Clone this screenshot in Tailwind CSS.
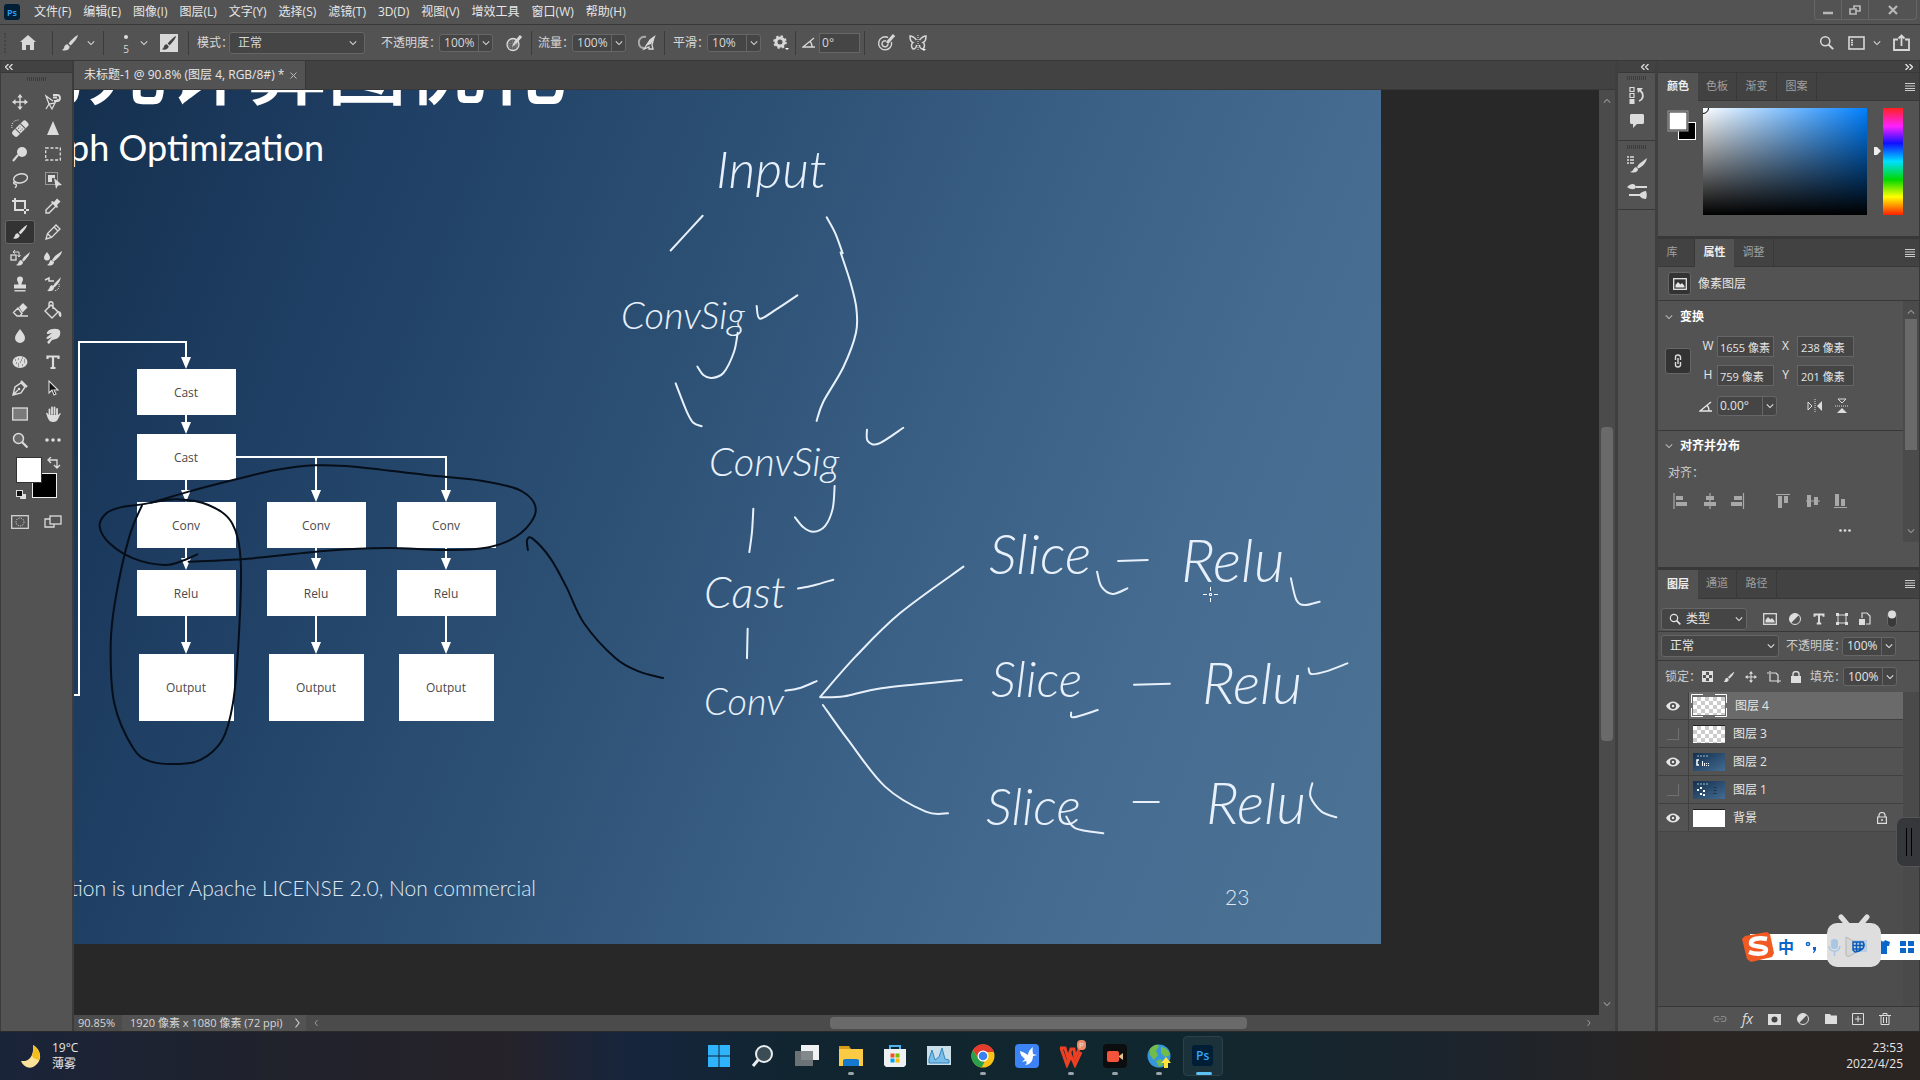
<!DOCTYPE html>
<html lang="zh-CN">
<head>
<meta charset="utf-8">
<title>未标题-1 - Photoshop</title>
<script src="https://cdn.jsdelivr.net/npm/@tailwindcss/browser@4"></script>
</head>
<body class="flex h-screen flex-col overflow-hidden bg-[#535353] font-['Open_Sans','Noto_Sans_CJK_SC',sans-serif] text-xs leading-4 text-[#e6e6e6]">

<svg class="hidden" aria-hidden="true">
  <symbol id="chev" viewBox="0 0 10 6"><path d="M1 1l4 4 4-4" fill="none" stroke="currentColor" stroke-width="1.3"/></symbol>
  <symbol id="brush" viewBox="0 0 18 18"><path d="M17 1c-2 .6-7 5.200-9.500 8.500l2 2C12.500 9 16.500 4 17 1zM6.500 10.300c-2 0-3 1.400-3.300 3-.3 1.500-1.200 2.200-2.200 2.700 2.800 1.200 7.300.5 7.700-3.300z" fill="currentColor"/></symbol>
  <symbol id="move" viewBox="0 0 18 18"><path d="M9 2v14M2 9h14" stroke="currentColor" stroke-width="1.500"/><path d="M9 0L6 4h6zM9 18l-3-4h6zM0 9l4-3v6zM18 9l-4-3v6z" fill="currentColor"/></symbol>
  <symbol id="menu" viewBox="0 0 10 8"><path d="M0 .5h10M0 3h10M0 5.500h10M0 7.500h10" stroke="currentColor"/></symbol>
  <symbol id="angle" viewBox="0 0 13 11"><path d="M12 1L1 10h12M8 4.500c2 1.500 2 3 2 5.500" fill="none" stroke="currentColor" stroke-width="1.300"/></symbol>
  <symbol id="eye" viewBox="0 0 14 10"><path d="M0 5c3.500-6 10.500-6 14 0-3.500 6-10.500 6-14 0z" fill="currentColor"/><circle cx="7" cy="5" r="3" fill="#4d4d4d"/><circle cx="7" cy="5" r="1.300" fill="currentColor"/></symbol>
  <symbol id="half" viewBox="0 0 14 14"><circle cx="7" cy="7" r="5.500" fill="none" stroke="currentColor"/><path d="M3.100 10.900A5.500 5.500 0 0 1 10.900 3.100z" fill="currentColor"/></symbol>
  <symbol id="mag" viewBox="0 0 18 18"><circle cx="7.500" cy="7.500" r="5.500" fill="none" stroke="currentColor" stroke-width="1.800"/><path d="M11.500 11.500L17 17" stroke="currentColor" stroke-width="2.400"/></symbol>
  <symbol id="dots" viewBox="0 0 16 4"><circle cx="2" cy="2" r="1.800" fill="currentColor"/><circle cx="8" cy="2" r="1.800" fill="currentColor"/><circle cx="14" cy="2" r="1.800" fill="currentColor"/></symbol>
  <symbol id="pic" viewBox="0 0 14 12"><rect x=".7" y=".7" width="12.600" height="10.600" fill="none" stroke="currentColor" stroke-width="1.300"/><path d="M2.500 9.500V7L5 4l2.500 2.500L9 5l2.500 3v1.500z" fill="currentColor"/></symbol>
</svg>

<header class="flex h-[25px] shrink-0 items-center border-b border-[#383838] pl-1">
  <svg class="mr-3.5 h-4 w-4 shrink-0" viewBox="0 0 16 16"><rect width="16" height="16" rx="3" fill="#001e36"/><text x="3" y="11.500" font-size="9" font-weight="600" fill="#31a8ff">Ps</text></svg>
  <nav class="flex gap-3 whitespace-nowrap">
    <a href="#">文件(F)</a><a href="#">编辑(E)</a><a href="#">图像(I)</a><a href="#">图层(L)</a><a href="#">文字(Y)</a><a href="#">选择(S)</a><a href="#">滤镜(T)</a><a href="#">3D(D)</a><a href="#">视图(V)</a><a href="#">增效工具</a><a href="#">窗口(W)</a><a href="#">帮助(H)</a>
  </nav>
  <div class="mr-[3px] ml-auto flex h-5 self-start rounded-b border border-t-0 border-[#666] text-[#b8b8b8]">
    <button aria-label="最小化" class="grid w-[27px] place-items-center border-r border-[#666]"><svg class="h-3 w-3" viewBox="0 0 12 12"><path d="M1 9h10" stroke="currentColor" stroke-width="2.500"/></svg></button>
    <button aria-label="还原" class="grid w-[27px] place-items-center border-r border-[#666]"><svg class="h-3 w-3" viewBox="0 0 12 12"><path d="M1 5h6v5H1zM5 5V2h6v5H7" fill="none" stroke="currentColor" stroke-width="1.700"/></svg></button>
    <button aria-label="关闭" class="grid w-[47px] place-items-center"><svg class="h-2.5 w-2.5" viewBox="0 0 10 10"><path d="M1 1l8 8M9 1L1 9" stroke="currentColor" stroke-width="2.200"/></svg></button>
  </div>
</header>

<section class="flex h-9 shrink-0 items-center border-b border-[#383838] whitespace-nowrap text-[#d8d8d8]">
  <div class="ml-1 h-5 w-1 border-l-2 border-dotted border-[#444]"></div>
  <button aria-label="主页" class="ml-3 grid w-4 place-items-center"><svg class="h-4 w-4" viewBox="0 0 16 16"><path d="M8 0l8 7h-2v8h-4v-5H6v5H2V7H0z" fill="currentColor"/></svg></button>
  <div class="mr-2 ml-4 h-6 w-px bg-[#3c3c3c]"></div>
  <svg class="h-[18px] w-[18px]"><use href="#brush"/></svg>
  <svg class="ml-2 h-[6px] w-2"><use href="#chev"/></svg>
  <div class="mx-2 h-6 w-px bg-[#3c3c3c]"></div>
  <div class="flex w-7 flex-col items-center gap-1 pt-1 text-[10px] leading-3"><span class="h-1 w-1 rounded-full bg-[#ddd]"></span><span>5</span></div>
  <svg class="h-[6px] w-2"><use href="#chev"/></svg>
  <div class="ml-3 grid h-[18px] w-[18px] place-items-center bg-[#d8d8d8] text-[#444]"><svg class="h-4 w-4"><use href="#brush"/></svg></div>
  <div class="mr-2 ml-2.5 h-6 w-px bg-[#3c3c3c]"></div>
  <label for="mode">模式：</label>
  <select id="mode" class="-ml-1 h-[22px] w-[136px] appearance-none rounded-[3px] border border-[#666] bg-[#454545] pl-2"><option>正常</option></select>
  <svg class="pointer-events-none -ml-4 h-[6px] w-2"><use href="#chev"/></svg>
  <label for="opa" class="ml-6">不透明度：</label>
  <div class="-ml-0.5 flex h-[18px] rounded-[3px] border border-[#666] bg-[#454545]"><input id="opa" value="100%" class="w-[38px] pl-1"><button aria-label="不透明度选项" class="grid w-3.5 place-items-center border-l border-[#666]"><svg class="h-[6px] w-2"><use href="#chev"/></svg></button></div>
  <svg class="ml-3 h-[18px] w-[18px]" viewBox="0 0 18 18"><circle cx="8" cy="10.500" r="6" fill="#777" stroke="currentColor" stroke-width="1.300"/><path d="M4 8h8M4 11h8M4 14h7M6 6v9M9 6v10" stroke="#535353" stroke-dasharray="1 1"/><path d="M16 2l-6 7" stroke="currentColor" stroke-width="3"/><path d="M9 8l2 2-4 3z" fill="currentColor"/></svg>
  <div class="mr-1.5 ml-2 h-6 w-px bg-[#3c3c3c]"></div>
  <label for="flow">流量：</label>
  <div class="-ml-0.5 flex h-[18px] rounded-[3px] border border-[#666] bg-[#454545]"><input id="flow" value="100%" class="w-[38px] pl-1"><button aria-label="流量选项" class="grid w-3.5 place-items-center border-l border-[#666]"><svg class="h-[6px] w-2"><use href="#chev"/></svg></button></div>
  <svg class="ml-3 h-[18px] w-[18px]" viewBox="0 0 18 18"><path d="M8 3C3 2 0 6 1 10c.6 3 3 4 5 4" fill="none" stroke="#aaa" stroke-width="2"/><path d="M16 3l-4 3-6 9 5-2v2h4l-1-4z" fill="none" stroke="currentColor" stroke-width="1.300"/><path d="M18 1l-6 5-4 6 5-2z" fill="currentColor"/></svg>
  <div class="mr-2 ml-2 h-6 w-px bg-[#3c3c3c]"></div>
  <label for="smooth">平滑：</label>
  <div class="-ml-0.5 flex h-[18px] rounded-[3px] border border-[#666] bg-[#454545]"><input id="smooth" value="10%" class="w-[38px] pl-1"><button aria-label="平滑选项" class="grid w-3.5 place-items-center border-l border-[#666]"><svg class="h-[6px] w-2"><use href="#chev"/></svg></button></div>
  <svg class="ml-3 h-4 w-4" viewBox="0 0 16 16"><circle cx="7" cy="7" r="4" fill="none" stroke="currentColor" stroke-width="3"/><circle cx="7" cy="7" r="5.800" fill="none" stroke="currentColor" stroke-width="2" stroke-dasharray="2.300 2.250"/><path d="M12 13h4l-2 2z" fill="#fff"/></svg>
  <div class="mx-1.5 h-6 w-px bg-[#3c3c3c]"></div>
  <svg class="h-[11px] w-[13px]"><use href="#angle"/></svg>
  <input aria-label="角度" value="0°" class="ml-1 h-5 w-[41px] border border-[#666] bg-[#454545] pl-0.5">
  <div class="mr-3 ml-1 h-6 w-px bg-[#3c3c3c]"></div>
  <svg class="h-[18px] w-[18px]" viewBox="0 0 18 18"><path d="M11 3.500A6.500 6.500 0 1 0 14.500 8" fill="none" stroke="currentColor" stroke-width="1.400"/><path d="M9 7a3 3 0 1 0 2 3" fill="none" stroke="currentColor" stroke-width="1.400"/><path d="M17 1l-7 8" stroke="currentColor" stroke-width="3"/></svg>
  <svg class="ml-3.5 h-[18px] w-[18px]" viewBox="0 0 18 18"><path d="M7.500 6C5 3 3 2 1 2c0 3 1 6 3 6.500C2 10 2 13 4 15c2 0 3.500-2 3.500-4M10.500 6C13 3 15 2 17 2c0 3-1 6-3 6.500 2 1.500 2 4.500 0 6.500-2 0-3.500-2-3.500-4" fill="none" stroke="currentColor" stroke-width="1.500"/><path d="M9 1v16" stroke="currentColor" stroke-dasharray="1 1"/><path d="M13 15h4l-2 2z" fill="#fff"/></svg>
  <div class="mr-2.5 ml-auto flex items-center">
    <button aria-label="搜索"><svg class="h-[15px] w-[15px]"><use href="#mag" width="15" height="15"/></svg></button>
    <svg class="ml-3.5 h-3.5 w-[17px]" viewBox="0 0 17 14"><rect x="1" y="1" width="15" height="12" fill="none" stroke="currentColor" stroke-width="1.600"/><path d="M4 3.500v7" stroke="currentColor" stroke-width="2" stroke-dasharray="1.500 .8"/></svg>
    <svg class="ml-2 h-[6px] w-2"><use href="#chev"/></svg>
    <button aria-label="共享" class="ml-3"><svg class="h-[18px] w-[17px]" viewBox="0 0 17 18"><path d="M5 5.500H1V16h15V5.500h-4M8.500 12V2M5.500 4.500l3-3 3 3" fill="none" stroke="currentColor" stroke-width="1.800"/></svg></button>
  </div>
</section>

<main class="flex min-h-0 flex-1">
  <!-- tools -->
  <aside class="flex w-[74px] shrink-0 flex-col border-x-2 border-l-[1px] border-[#3c3c3c] text-[#dcdcdc]">
    <div class="flex h-3 shrink-0 items-center border-b border-[#383838] bg-[#424242] pl-1"><svg class="h-[6px] w-2" viewBox="0 0 8 6"><path d="M3.500 0l-3 3 3 3M7.500 0l-3 3 3 3" fill="none" stroke="currentColor" stroke-width="1.300"/></svg></div>
    <div class="mx-auto mt-1 mb-2 h-1 w-5 bg-[repeating-linear-gradient(90deg,#3c3c3c_0_1px,#535353_1px_2px)]"></div>
    <div class="grid grid-cols-2 px-0.5">
      <button aria-label="移动" class="grid h-[26px] place-items-center"><svg class="h-4 w-4"><use href="#move"/></svg></button>
      <button aria-label="磁性套索" class="grid h-[26px] place-items-center"><svg class="h-[18px] w-[18px]" viewBox="0 0 18 18"><path d="M9 8l-7-5 3 8M2 16l3-5 6-1 3-4M5 11l3 5 3-6" fill="none" stroke="currentColor" stroke-width="1.300"/><path d="M9 2h4a3 3 0 0 1 0 6h-3M9 4.500h4" fill="none" stroke="currentColor" stroke-width="1.800"/></svg></button>
      <button aria-label="修复画笔" class="grid h-[26px] place-items-center"><svg class="h-[18px] w-[18px]" viewBox="0 0 18 18"><g transform="rotate(-45 9 10)"><rect x="0" y="6.500" width="19" height="7" rx="2.500" fill="currentColor"/><path d="M6 6.500v7M13 6.500v7" stroke="#535353"/><path d="M8 8.500h3M8 11.500h3" stroke="#535353" stroke-dasharray="1 1"/></g><path d="M1 9C0 4 3 1 8 1" fill="none" stroke="currentColor" stroke-dasharray="1 1"/></svg></button>
      <button aria-label="锐化" class="grid h-[26px] place-items-center"><svg class="h-4 w-4" viewBox="0 0 16 16"><path d="M8 1l6 14H2z" fill="currentColor"/></svg></button>
      <button aria-label="减淡" class="grid h-[26px] place-items-center"><svg class="h-4 w-4" viewBox="0 0 16 16"><circle cx="10" cy="6" r="5" fill="currentColor"/><path d="M6 9l-5 6" stroke="currentColor" stroke-width="2"/></svg></button>
      <button aria-label="选框" class="grid h-[26px] place-items-center"><svg class="h-4 w-4" viewBox="0 0 16 16"><rect x=".7" y="2" width="14.600" height="12" fill="none" stroke="currentColor" stroke-width="1.300" stroke-dasharray="3 1.800"/></svg></button>
      <button aria-label="套索" class="grid h-[26px] place-items-center"><svg class="h-4 w-4" viewBox="0 0 16 16"><ellipse cx="8.500" cy="6.500" rx="7" ry="4.500" transform="rotate(-12 8 6)" fill="none" stroke="currentColor" stroke-width="1.400"/><path d="M4 10c-3-1-3 2-1 2s2 2 0 4" fill="none" stroke="currentColor" stroke-width="1.400"/></svg></button>
      <button aria-label="对象选择" class="grid h-[26px] place-items-center"><svg class="h-[18px] w-[18px]" viewBox="0 0 18 18"><rect x="1.500" y="1.500" width="12" height="12" fill="none" stroke="currentColor" stroke-dasharray="1 1"/><path d="M4 4h7v3H8v4H4z" fill="currentColor"/><path d="M10 7l8 7-4 .5-2 3.500z" fill="currentColor"/></svg></button>
      <button aria-label="裁剪" class="grid h-[26px] place-items-center"><svg class="h-[18px] w-[18px]" viewBox="0 0 18 18"><path d="M4 1v12h9M14 17v-3M1 4h2M5 4h9v8M15 13h3" fill="none" stroke="currentColor" stroke-width="2"/></svg></button>
      <button aria-label="吸管" class="grid h-[26px] place-items-center"><svg class="h-4 w-4" viewBox="0 0 16 16"><path d="M8 5l3 3-7 7H1v-3z" fill="none" stroke="currentColor" stroke-width="1.400"/><path d="M7 3l2 1 3-3.500 3.500 3L12 7l1 2-1 1-6-6z" fill="currentColor"/></svg></button>
      <button aria-label="画笔" class="mx-0.5 my-px grid h-6 place-items-center rounded-[3px] border border-[#666] bg-[#333]"><svg class="h-4 w-4"><use href="#brush"/></svg></button>
      <button aria-label="铅笔" class="grid h-[26px] place-items-center"><svg class="h-4 w-4" viewBox="0 0 16 16"><path d="M1 15l1.500-5.500L11 1l4 4-8.500 8.500zM2.500 9.500l4 4M9 3l4 4" fill="none" stroke="currentColor" stroke-width="1.300"/></svg></button>
      <button aria-label="颜色替换" class="grid h-[26px] place-items-center"><svg class="h-[18px] w-5" viewBox="0 0 20 18"><rect x="1" y="6" width="5" height="5" fill="none" stroke="currentColor" stroke-width="1.300"/><path d="M3 3l2-2M3 3l2 1.500M3 3h6v4M7.500 6L9 8l1.500-2" fill="none" stroke="currentColor"/><path d="M20 3l-6 5-2 3 1.500 1.500C16 10 19 7 20 3zM11 11c-3 1-2 4-5 5 4 1.500 7 0 7-3z" fill="currentColor"/></svg></button>
      <button aria-label="混合器画笔" class="grid h-[26px] place-items-center"><svg class="h-[18px] w-[18px]" viewBox="0 0 18 18"><path d="M3 3C1 6 0 7 0 8.500a3 3 0 0 0 6 0C6 7 5 6 3 3z" fill="currentColor"/><path d="M18 2l-7 5-3 4 1.500 1.500C13 10 17 7 18 2zM7 11c-2 1-1 4-4 5 4 1.500 7 0 7-3z" fill="currentColor"/></svg></button>
      <button aria-label="图章" class="grid h-[26px] place-items-center"><svg class="h-4 w-4" viewBox="0 0 16 16"><path d="M5 3.500a3 3 0 0 1 6 0c0 2-1.500 2.500-1.500 5H14v4H2v-4h4.500C6.500 6 5 5.500 5 3.500z" fill="currentColor"/><path d="M2.500 14.800h11" stroke="currentColor" stroke-width="1.400"/></svg></button>
      <button aria-label="历史记录画笔" class="grid h-[26px] place-items-center"><svg class="h-[18px] w-[18px]" viewBox="0 0 18 18"><path d="M17 2l-6 6-2 3 1.500 1.500C13 10 16 7 17 2zM8 10c-3 1-2 4-5 6 4 .5 7 0 7-4z" fill="currentColor"/><path d="M1 5l4-2v3h5" fill="none" stroke="currentColor" stroke-width="1.500"/><path d="M15 9c1 4-1 6-5 7" fill="none" stroke="currentColor" stroke-dasharray="1 1"/></svg></button>
      <button aria-label="橡皮擦" class="grid h-[26px] place-items-center"><svg class="h-4 w-4" viewBox="0 0 16 16"><path d="M7 5l4-4 4.500 4.500-5 5z" fill="currentColor"/><path d="M6 6l-4.500 4.500L5 14h3l2-2.500zM5 14h11" fill="none" stroke="currentColor" stroke-width="1.400"/></svg></button>
      <button aria-label="油漆桶" class="grid h-[26px] place-items-center"><svg class="h-[18px] w-[18px]" viewBox="0 0 18 18"><path d="M7 4l7 7-6 6-7-7zM9 8V3c0-3-4-3-4 0v4" fill="none" stroke="currentColor" stroke-width="1.400"/><path d="M9 5l5 5c3 0 4 3 3 6-3 0-2-4-3-5z" fill="currentColor"/></svg></button>
      <button aria-label="模糊" class="grid h-[26px] place-items-center"><svg class="h-4 w-4" viewBox="0 0 16 16"><path d="M8 1c3 4 5 6.500 5 9A5 5 0 0 1 3 10c0-2.500 2-5 5-9z" fill="currentColor"/></svg></button>
      <button aria-label="涂抹" class="grid h-[26px] place-items-center"><svg class="h-4 w-4" viewBox="0 0 16 16"><path d="M3 3c3-3 11-3 12 0 1 4-1 7-4 8-2 0-2 1-4 1l-3 4c-2-1-2-2-1-3l4-4-4 2c-2 0-2-1-1-2l5-4-4 1C1 6 2 4 3 3z" fill="currentColor"/></svg></button>
      <button aria-label="海绵" class="grid h-[26px] place-items-center"><svg class="h-4 w-4" viewBox="0 0 16 16"><ellipse cx="8" cy="8" rx="7.500" ry="6" fill="currentColor"/><path d="M3 6h1M6 5h1M10 4h1M4 9h1M8 8h1M12 8h1M6 12h1M10 11h1M9 6h1M6 10h1M12 6h1" stroke="#535353" stroke-width="1"/></svg></button>
      <button aria-label="文字" class="grid h-[26px] place-items-center"><svg class="h-4 w-4" viewBox="0 0 16 16"><path d="M2.500 5V2.500h11V5M8 2.500v11M5.500 14h5" fill="none" stroke="currentColor" stroke-width="2.200"/></svg></button>
      <button aria-label="钢笔" class="grid h-[26px] place-items-center"><svg class="h-4 w-4" viewBox="0 0 16 16"><path d="M1 15L3 7l6-4 4 4-4 6zM1 15l5-5" fill="none" stroke="currentColor" stroke-width="1.400"/><circle cx="7" cy="9" r="1.300" fill="currentColor"/><path d="M9 1l6 6" stroke="currentColor" stroke-width="2.200"/></svg></button>
      <button aria-label="路径选择" class="grid h-[26px] place-items-center"><svg class="h-4 w-4" viewBox="0 0 16 16"><path d="M4 1v12l3-3 2 5 2-1-2-4h4z" fill="#111" stroke="currentColor" stroke-width="1.100"/></svg></button>
      <button aria-label="矩形" class="grid h-[26px] place-items-center"><svg class="h-4 w-4" viewBox="0 0 16 16"><rect x=".7" y="2" width="14.600" height="12" fill="#7a7a7a" stroke="currentColor" stroke-width="1.300"/></svg></button>
      <button aria-label="抓手" class="grid h-[26px] place-items-center"><svg class="h-4 w-4" viewBox="0 0 16 16"><path d="M4.500 9V3.500M7 8V1.500M9.500 8V1.500M12 9V3" stroke="currentColor" stroke-width="1.800" stroke-linecap="round"/><path d="M1 7c1-1 2 1 3 2h9l2-2c1 0 1 1 0 2l-2 4c-1 2-2 3-5 3-4 0-5-3-7-9z" fill="currentColor"/></svg></button>
      <button aria-label="缩放" class="grid h-[26px] place-items-center"><svg class="h-4 w-4" viewBox="0 0 16 16"><circle cx="6.500" cy="6.500" r="5" fill="#6a6a6a" stroke="currentColor" stroke-width="1.500"/><path d="M10 10l5.500 5.500" stroke="currentColor" stroke-width="2.200"/></svg></button>
      <button aria-label="更多" class="grid h-[26px] place-items-center"><svg class="h-1 w-4"><use href="#dots"/></svg></button>
    </div>
    <svg class="mt-1 h-[50px] w-[71px] shrink-0" viewBox="1 4 71 50"><rect x="32.500" y="20.500" width="24" height="24" fill="#000" stroke="#eee"/><rect x="16.500" y="4.500" width="25" height="25" fill="#fff" stroke="#333"/><path d="M49 7h8v7M51 4l-3 3 3 3M54 12l3 3 3-3" fill="none" stroke="#ddd" stroke-width="1.300"/><path d="M21 41h5v5h-6z" fill="#ddd"/><rect x="16.500" y="37.500" width="6" height="6" fill="#111" stroke="#ddd"/></svg>
    <div class="mt-0.5 grid grid-cols-2 px-0.5">
      <button aria-label="快速蒙版" class="grid h-[26px] place-items-center"><svg class="h-3.5 w-[18px]" viewBox="0 0 18 14"><rect x=".7" y=".7" width="16.600" height="12.600" fill="none" stroke="currentColor" stroke-width="1.200"/><circle cx="9" cy="7" r="4" fill="none" stroke="currentColor" stroke-dasharray="1.200 1.200"/></svg></button>
      <button aria-label="屏幕模式" class="grid h-[26px] place-items-center"><svg class="h-3.5 w-[18px]" viewBox="0 0 18 14"><path d="M6 4H1v8h9V9" fill="none" stroke="currentColor" stroke-width="1.300"/><rect x="6" y="1" width="11" height="8" fill="none" stroke="currentColor" stroke-width="1.300"/></svg></button>
    </div>
  </aside>

  <!-- document window -->
  <section class="flex min-w-0 flex-1 flex-col">
    <div class="flex h-[29px] shrink-0 border-b border-[#383838] bg-[#424242]">
      <div class="flex items-center gap-1.5 border-r border-[#383838] bg-[#535353] pr-2 pl-2.5 whitespace-nowrap"><span>未标题-1 @ 90.8% (图层 4, RGB/8#) *</span><button aria-label="关闭文档"><svg class="h-[7px] w-[7px]" viewBox="0 0 7 7"><path d="M.5.5l6 6M6.500.5l-6 6" stroke="#bbb"/></svg></button></div>
    </div>
    <div class="flex min-h-0 flex-1">
      <div class="min-w-0 flex-1 overflow-hidden bg-[#282828]">
        <svg class="block h-[854px] w-[1307px] bg-[linear-gradient(112deg,#15304f_0%,#1f3f64_20%,#2c5074_42%,#3b6085_62%,#466c91_80%,#4c7295_100%)]" viewBox="74 90 1307 854">
          <g fill="#fff" font-family="'Noto Sans CJK SC',sans-serif">
            <text x="7" y="98" font-size="80" font-weight="500">的元计算图优化</text>
            <text x="324" y="161" font-size="36" text-anchor="end" font-family="Lato,sans-serif">Graph Optimization</text>
            <text x="536" y="896" font-size="21" text-anchor="end" font-weight="300" font-family="Lato,sans-serif" fill="#dfe8f2">Publication is under Apache LICENSE 2.0, Non commercial</text>
            <text x="1225" y="905" font-size="21" font-weight="300" font-family="Lato,sans-serif" fill="#dfe8f2">23</text>
          </g>
          <g fill="none" stroke="#fff" stroke-width="2">
            <path d="M74 695h5V342h107v16M186 415v10M186 480v14M236 457h210v34M316 457v34M186 548v12M316 548v12M446 548v12M186 616v28M316 616v28M446 616v28"/>
          </g>
          <g fill="#fff">
            <path d="M181 357h10l-5 12zM181 422h10l-5 12zM181 490h10l-5 12zM311 490h10l-5 12zM441 490h10l-5 12zM181 558h10l-5 12zM311 558h10l-5 12zM441 558h10l-5 12zM181 642h10l-5 12zM311 642h10l-5 12zM441 642h10l-5 12z"/>
            <path d="M137 369h99v46h-99zM137 434h99v46h-99zM137 502h99v46h-99zM267 502h99v46h-99zM397 502h99v46h-99zM137 570h99v46h-99zM267 570h99v46h-99zM397 570h99v46h-99zM139 654h95v67h-95zM269 654h95v67h-95zM399 654h95v67h-95z"/>
          </g>
          <g fill="#4a4a4a" font-size="12" text-anchor="middle" font-family="'Open Sans',sans-serif">
            <text x="186" y="397">Cast</text><text x="186" y="462">Cast</text>
            <text x="186" y="530">Conv</text><text x="316" y="530">Conv</text><text x="446" y="530">Conv</text>
            <text x="186" y="598">Relu</text><text x="316" y="598">Relu</text><text x="446" y="598">Relu</text>
            <text x="186" y="692">Output</text><text x="316" y="692">Output</text><text x="446" y="692">Output</text>
          </g>
          <g transform="translate(70 320) scale(.3954 .3333)" fill="none" stroke="#060e1a" stroke-width="2" stroke-linecap="round">
            <path data-ink="322 703 290 720 240 735 160 715 100 670 75 620 90 582 125 563 205 548 300 515 420 478 520 450 620 436 720 440 900 465 1040 482 1140 512 1178 570 1140 640 1060 682 950 690 800 684 650 692 450 716 300 725"/>
            <path data-ink="182 556 150 650 116 830 103 970 112 1150 160 1285 205 1325 270 1332 330 1320 385 1260 412 1150 426 970 432 730 410 610 350 555 270 538 205 548"/>
            <path data-ink="1158 690 1156 660 1170 656 1215 715 1255 800 1300 910 1380 1015 1440 1055 1500 1074"/>
          </g>
          <g fill="none" stroke="#e8f1fb" stroke-width="2" stroke-linecap="round">
            <g transform="translate(600 130) scale(.3333 .3827)">
              <path data-ink="308 224 212 315"/><path data-ink="680 228 706 270 728 322"/><path data-ink="722 320 752 400 769 465 768 530 730 620 670 710 650 760"/>
              <path data-ink="470 460 480 493 530 468 592 432"/><path data-ink="227 662 260 735 280 765 305 774"/><path data-ink="801 783 803 812 835 820 910 778"/>
              <path data-ink="413 530 402 580 370 635 335 648 310 640 292 618"/><path data-ink="704 930 698 990 675 1035 640 1050 610 1038 585 1012"/>
              <path data-ink="460 990 456 1050 448 1103"/><path data-ink="594 1198 640 1190 700 1175"/><path data-ink="443 1303 441 1380"/><path data-ink="556 1465 600 1458 650 1440"/>
            </g>
            <g transform="translate(800 490) scale(.3699 .3333)">
              <path data-ink="442 230 270 370 150 500 55 620"/><path data-ink="55 622 120 619 220 595 437 570"/><path data-ink="62 645 130 750 230 890 340 965 400 970"/>
              <path data-ink="860 213 940 210"/><path data-ink="903 584 1000 581"/><path data-ink="902 936 970 936"/>
              <path data-ink="803 245 815 290 845 312 885 295"/><path data-ink="1327 265 1342 330 1365 345 1405 335"/><path data-ink="733 668 740 682 805 660"/><path data-ink="1375 535 1382 552 1420 545 1480 520"/><path data-ink="1385 880 1380 920 1410 965 1450 982"/><path data-ink="720 980 745 1015 820 1030"/>
            </g>
          </g>
          <g fill="#e8f1fb" font-family="Lato,sans-serif" font-style="italic" font-weight="300">
            <text x="716" y="188" font-size="52">Input</text>
            <text x="621" y="329" font-size="38">ConvSig</text>
            <text x="709" y="476" font-size="40">ConvSig</text>
            <text x="704" y="608" font-size="44">Cast</text>
            <text x="704" y="715" font-size="38">Conv</text>
            <text x="989" y="574" font-size="56">Slice</text>
            <text x="991" y="697" font-size="50">Slice</text>
            <text x="986" y="825" font-size="52">Slice</text>
            <text x="1181" y="582" font-size="60">Relu</text>
            <text x="1202" y="704" font-size="58">Relu</text>
            <text x="1206" y="824" font-size="58">Relu</text>
          </g>
          <path d="M1203 594.500h4M1214 594.500h4M1210.500 587v4M1210.500 598v4M1209.500 593.500h2v2h-2z" fill="none" stroke="#fff"/>
        </svg>
      </div>
      <div class="flex w-4 shrink-0 flex-col items-center bg-[#4b4b4b] py-2 text-[#999]">
        <svg class="h-[6px] w-2 rotate-180"><use href="#chev"/></svg>
        <div class="flex w-full flex-1 flex-col items-center"><div class="h-[36%]"></div><div class="h-[35%] w-3 rounded-sm bg-[#6a6a6a]"></div></div>
        <svg class="h-[6px] w-2"><use href="#chev"/></svg>
      </div>
    </div>
    <footer class="flex h-4 shrink-0 items-center bg-[#4b4b4b] whitespace-nowrap text-[#d8d8d8]">
      <span class="w-12 pl-1 text-[11px]">90.85%</span>
      <span class="flex h-full w-[184px] items-center justify-between bg-[#535353] pr-1.5 pl-2 text-[11px]">1920 像素 x 1080 像素 (72 ppi)<svg class="h-2.5 w-[5px]" viewBox="0 0 5 10"><path d="M.5.5L4 5 .5 9.500" fill="none" stroke="#ccc" stroke-width="1.200"/></svg></span>
      <svg class="ml-2 h-2 w-1" viewBox="0 0 4 8"><path d="M3.500 1L1 4l2.500 3" fill="none" stroke="#999"/></svg>
      <div class="ml-2 h-3 flex-1"><div class="ml-[40%] h-full w-[33%] rounded-sm bg-[#6a6a6a]"></div></div>
      <svg class="mr-6 h-2 w-1" viewBox="0 0 4 8"><path d="M.5 1L3 4 .5 7" fill="none" stroke="#999"/></svg>
    </footer>
  </section>

  <!-- collapsed panels -->
  <aside class="flex w-[43px] shrink-0 flex-col items-center border-x-[3px] border-[#3f3f3f] text-[#dcdcdc]">
    <div class="flex h-3 w-full shrink-0 items-center justify-end border-b border-[#383838] bg-[#424242] pr-1.5"><svg class="h-[6px] w-2" viewBox="0 0 8 6"><path d="M3.500 0l-3 3 3 3M7.500 0l-3 3 3 3" fill="none" stroke="currentColor" stroke-width="1.300"/></svg></div>
    <div class="mt-[3px] h-1 w-5 bg-[repeating-linear-gradient(90deg,#3c3c3c_0_1px,#535353_1px_2px)]"></div>
    <button aria-label="历史记录" class="mt-1.5"><svg class="h-[18px] w-4" viewBox="0 0 16 18"><path d="M1 1.500h4v4H1zM1 7.500h4v4H1z" fill="none" stroke="currentColor" stroke-width="1.200"/><path d="M.5 13H5.500v5H.5z" fill="currentColor"/><path d="M10 15c5-2 5-7 1-11" fill="none" stroke="currentColor" stroke-width="1.800"/><path d="M8 2h6l-5 5z" fill="currentColor"/></svg></button>
    <button aria-label="注释" class="mt-2.5"><svg class="h-3.5 w-3.5" viewBox="0 0 14 14"><path d="M1 0h12l1 1v8l-1 1H7l-4 4v-4H1L0 9V1z" fill="currentColor"/></svg></button>
    <div class="mt-3 h-px w-full bg-[#383838]"></div>
    <div class="mt-1 h-1 w-5 bg-[repeating-linear-gradient(90deg,#3c3c3c_0_1px,#535353_1px_2px)]"></div>
    <button aria-label="画笔设置" class="mt-1.5"><svg class="h-[18px] w-5" viewBox="0 0 20 18"><path d="M0 2h2M3 2h4M0 5h2M3 5h4M0 8h2M3 8h4" stroke="currentColor" stroke-width="1.500"/><path d="M20 3l-8 6-2 3 1.500 1.500C16 11 19 8 20 3zM9 12c-3 1-2 4-6 5 5 1.500 8 0 8-3z" fill="currentColor"/></svg></button>
    <button aria-label="画笔" class="mt-2.5"><svg class="h-4 w-5" viewBox="0 0 20 16"><path d="M9 4h11M2 12h11" stroke="currentColor" stroke-width="2"/><path d="M0 4c4-4 8-4 9 0-1 3-5 3-9 0zM12 12c2-3 5-4 7-4 1 3 1 5 0 8-3 0-5-1-7-4z" fill="currentColor"/></svg></button>
    <div class="mt-2.5 h-px w-full bg-[#383838]"></div>
  </aside>

  <!-- panels -->
  <aside class="flex w-[262px] shrink-0 flex-col border-r border-[#383838]">
    <div class="flex h-3 shrink-0 items-center justify-end border-b border-[#383838] bg-[#424242] pr-1.5"><svg class="h-[6px] w-2" viewBox="0 0 8 6"><path d="M.5 0l3 3-3 3M4.500 0l3 3-3 3" fill="none" stroke="currentColor" stroke-width="1.300"/></svg></div>
    <div class="flex h-7 shrink-0 items-stretch border-b border-[#383838] bg-[#424242] text-[11px] text-[#a0a0a0]">
      <button class="-mb-px w-10 bg-[#535353] pb-0.5 font-bold text-[#eee]">颜色</button><button class="w-[39px] border-r border-[#383838] pb-0.5">色板</button><button class="w-10 border-r border-[#383838] pb-0.5">渐变</button><button class="w-10 border-r border-[#383838] pb-0.5">图案</button>
      <svg class="mr-1 ml-auto h-2 w-2.5 self-center text-[#ccc]"><use href="#menu"/></svg>
    </div>
    <div class="flex h-[135px] shrink-0 gap-1.5 pt-[7px] pl-[9px]">
      <svg class="mt-0.5 h-8 w-[30px]" viewBox="0 0 30 32"><rect x="11.500" y="12.500" width="17" height="17" fill="#000" stroke="#fff"/><rect x="1" y="1" width="20" height="20" fill="#fff" stroke="#999"/><rect x="2" y="2" width="18" height="18" fill="none" stroke="#222"/></svg>
      <div class="relative h-[107px] w-[164px] bg-[linear-gradient(to_top,#000,transparent),linear-gradient(to_right,#fff,#0080ff)]"><svg class="absolute top-0 left-0 h-1.5 w-1.5" viewBox="0 0 6 6"><path d="M5.500 0a5.500 5.500 0 0 1-5.500 5.500" fill="none" stroke="#000"/></svg></div>
      <svg class="mt-[38px] h-2.5 w-2" viewBox="0 0 8 10"><path d="M1 1h3l4 4-4 4H1z" fill="#eee"/></svg>
      <div class="-ml-1 h-[107px] w-5 bg-[linear-gradient(to_bottom,#ff2020,#ff20ff_17%,#1010ff_33%,#00e0ff_50%,#00d800_67%,#ffff00_83%,#ff2000)]"></div>
    </div>

    <div class="flex h-[31px] shrink-0 items-stretch border-y border-[#383838] border-t-[3px] bg-[#424242] text-[11px] text-[#a0a0a0]">
      <button class="w-[37px] border-r border-[#383838] pr-2 pb-0.5">库</button><button class="-mb-px w-[39px] bg-[#535353] pb-0.5 font-bold text-[#eee]">属性</button><button class="w-10 border-r border-[#383838] pb-0.5">调整</button>
      <svg class="mr-1 ml-auto h-2 w-2.5 self-center text-[#ccc]"><use href="#menu"/></svg>
    </div>
    <div class="flex h-[34px] shrink-0 items-center gap-[7px] border-b border-[#383838] pl-2.5"><span class="grid h-[23px] w-[23px] place-items-center rounded-[3px] border border-[#666] bg-[#333]"><svg class="h-3 w-3.5"><use href="#pic"/></svg></span>像素图层</div>
    <div class="flex h-[266px] shrink-0">
      <div class="min-w-0 flex-1">
        <div class="flex h-[130px] flex-col border-b border-[#383838] pl-[7px]">
          <h2 class="mt-2 flex items-center gap-[7px] font-bold text-white"><svg class="h-[6px] w-2 text-[#bbb]"><use href="#chev"/></svg>变换</h2>
          <div class="mt-[11px] flex items-center">
            <button aria-label="链接" class="mr-2 grid h-[26px] w-[26px] place-items-center rounded-[3px] border border-[#666] bg-[#333]"><svg class="h-3.5 w-2" viewBox="0 0 8 14"><path d="M1.500 6V3a2.500 2 0 0 1 5 0v3M1.500 8v3a2.500 2 0 0 0 5 0V8M4 4v6" fill="none" stroke="#ddd" stroke-width="1.400"/></svg></button>
            <div class="grid grid-cols-[18px_57px_23px_57px] gap-y-2">
              <label for="pw" class="pt-0.5 text-center">W</label><input id="pw" value="1655 像素" class="h-[21px] min-w-0 border border-[#666] bg-[#454545] pl-0.5 text-[11px]"><label for="px" class="pt-0.5 text-center">X</label><input id="px" value="238 像素" class="h-[21px] min-w-0 border border-[#666] bg-[#454545] pl-[3px] text-[11px]">
              <label for="ph" class="pt-0.5 text-center">H</label><input id="ph" value="759 像素" class="h-[21px] min-w-0 border border-[#666] bg-[#454545] pl-0.5 text-[11px]"><label for="py" class="pt-0.5 text-center">Y</label><input id="py" value="201 像素" class="h-[21px] min-w-0 border border-[#666] bg-[#454545] pl-[3px] text-[11px]">
            </div>
          </div>
          <div class="mt-2.5 flex items-center pl-[34px]"><svg class="h-[11px] w-[13px]"><use href="#angle"/></svg>
            <div class="ml-[5px] flex h-5 rounded-[3px] border border-[#666] bg-[#454545]"><input aria-label="旋转" value="0.00°" class="w-11 pl-0.5"><button aria-label="旋转选项" class="grid w-3.5 place-items-center border-l border-[#666]"><svg class="h-[6px] w-2"><use href="#chev"/></svg></button></div>
            <svg class="ml-[30px] h-3.5 w-4" viewBox="0 0 16 14"><path d="M1 3l4 4-4 4z" fill="none" stroke="#ddd"/><path d="M15 2v10l-5-5z" fill="#ddd"/><path d="M8 0v14" stroke="#ddd" stroke-dasharray="1 1"/></svg>
            <svg class="ml-3 h-4 w-3.5" viewBox="0 0 14 16"><path d="M3 1h8L7 5z" fill="none" stroke="#ddd"/><path d="M2 15h10l-5-5z" fill="#ddd"/><path d="M0 8h14" stroke="#ddd" stroke-dasharray="1 1"/></svg>
          </div>
        </div>
        <h2 class="mt-[7px] flex items-center gap-[7px] pl-[7px] font-bold text-white"><svg class="h-[6px] w-2 text-[#bbb]"><use href="#chev"/></svg>对齐并分布</h2>
        <p class="mt-[11px] pl-2.5 text-[#ccc]">对齐：</p>
        <div class="mt-3 flex pl-[15px] text-[#a8a8a8]">
          <svg class="h-4 w-[174px]" viewBox="0 0 174 16"><path d="M1 0v16M37 0v16M70.500 0v16M103 1.500h14M133 8h14M161 14.500h14" stroke="currentColor" stroke-width="1.200"/><path d="M3 3h7v4H3zM3 9h11v4H3zM33 3h8v4h-8zM31 9h12v4H31zM61 3h8v4h-8zM58 9h11v4H58zM105 3h4v12h-4zM111 3h4v7h-4zM134 2h4v12h-4zM141 4h4v8h-4zM162 1h4v12h-4zM168 6h4v7h-4z" fill="currentColor"/></svg>
        </div>
        <svg class="mt-5 ml-[181px] h-[3px] w-3 text-[#ddd]"><use href="#dots"/></svg>
      </div>
      <div class="flex h-[241px] w-4 shrink-0 flex-col items-center bg-[#4b4b4b] py-2 text-[#999]"><svg class="h-[6px] w-2 rotate-180"><use href="#chev"/></svg><div class="mt-1 h-[131px] w-3 bg-[#6a6a6a]"></div><svg class="mt-auto h-[6px] w-2"><use href="#chev"/></svg></div>
    </div>

    <div class="flex h-8 shrink-0 items-stretch border-y border-[#383838] border-t-[3px] bg-[#424242] text-[11px] text-[#a0a0a0]">
      <button class="-mb-px w-10 bg-[#535353] pb-0.5 font-bold text-[#eee]">图层</button><button class="w-[39px] border-r border-[#383838] pb-0.5">通道</button><button class="w-10 border-r border-[#383838] pb-0.5">路径</button>
      <svg class="mr-1 ml-auto h-2 w-2.5 self-center text-[#ccc]"><use href="#menu"/></svg>
    </div>
    <div class="flex h-[33px] shrink-0 items-center border-b border-[#383838] pt-2 pl-[3px]">
      <svg class="pointer-events-none z-10 -mr-5 ml-2 h-3 w-3"><use href="#mag"/></svg>
      <select aria-label="筛选" class="h-[22px] w-[86px] appearance-none rounded-[3px] border border-[#666] bg-[#454545] pl-6"><option>类型</option></select>
      <svg class="pointer-events-none -ml-3 h-[6px] w-2"><use href="#chev"/></svg>
      <div class="ml-5 flex items-center gap-[11px] text-[#ddd]">
        <svg class="h-3 w-3.5"><use href="#pic"/></svg><svg class="h-3.5 w-3.5"><use href="#half"/></svg>
        <svg class="h-3 w-3" viewBox="0 0 16 16"><path d="M2 5V2h12v3M8 2v12M5 14h6" fill="none" stroke="currentColor" stroke-width="2.600"/></svg>
        <svg class="h-3 w-3" viewBox="0 0 12 12"><path d="M2 2h8v8H2z" fill="none" stroke="currentColor"/><path d="M0 0h3v3H0zM9 0h3v3H9zM0 9h3v3H0zM9 9h3v3H9z" fill="currentColor"/></svg>
        <svg class="h-3.5 w-3" viewBox="0 0 12 14"><path d="M3 6V1h5l3 3v8H7" fill="none" stroke="currentColor" stroke-width="1.200"/><path d="M0 7h6v6H0z" fill="currentColor"/></svg>
      </div>
      <svg class="ml-4 h-[18px] w-2.5" viewBox="0 0 10 18"><rect x=".5" y=".5" width="9" height="17" rx="4.500" fill="#3a3a3a" stroke="#666"/><circle cx="5" cy="4.500" r="4" fill="#ddd"/></svg>
    </div>
    <div class="flex h-[29px] shrink-0 items-center border-b border-[#383838] pl-[3px] whitespace-nowrap">
      <select aria-label="混合模式" class="h-[22px] w-[118px] appearance-none rounded-[3px] border border-[#666] bg-[#454545] pl-2"><option>正常</option></select><svg class="pointer-events-none -ml-3 h-[6px] w-2"><use href="#chev"/></svg>
      <label for="lo" class="ml-[11px] w-[54px] overflow-hidden text-[#ccc]">不透明度：</label>
      <div class="ml-0.5 flex h-[19px] rounded-[3px] border border-[#666] bg-[#454545]"><input id="lo" value="100%" class="w-[38px] pl-1"><button aria-label="不透明度" class="grid w-3.5 place-items-center border-l border-[#666]"><svg class="h-[6px] w-2"><use href="#chev"/></svg></button></div>
    </div>
    <div class="flex h-[31px] shrink-0 items-center pl-[7px] whitespace-nowrap">
      <span class="w-[37px] overflow-hidden text-[#ccc]">锁定：</span>
      <div class="flex items-center gap-2.5 text-[#ddd]">
        <svg class="h-[11px] w-[11px]" viewBox="0 0 11 11"><rect x=".5" y=".5" width="10" height="10" fill="none" stroke="currentColor"/><path d="M1 1h3v3H1zM7 1h3v3H7zM4 4h3v3H4zM1 7h3v3H1zM7 7h3v3H7z" fill="currentColor"/></svg>
        <svg class="h-3 w-3"><use href="#brush"/></svg><svg class="h-3 w-3"><use href="#move"/></svg>
        <svg class="h-3 w-3.5" viewBox="0 0 14 12"><path d="M3 0v10h11M0 2h2M4 2h5l2 2v8" fill="none" stroke="currentColor" stroke-width="1.200"/></svg>
        <svg class="h-3 w-2.5" viewBox="0 0 10 12"><rect y="5" width="10" height="7" fill="currentColor"/><path d="M2 5V3a3 2.500 0 0 1 6 0v2" fill="none" stroke="currentColor" stroke-width="1.400"/></svg>
      </div>
      <label for="lf" class="ml-[9px] w-[33px] overflow-hidden text-[#ccc]">填充：</label>
      <div class="flex h-[19px] rounded-[3px] border border-[#666] bg-[#454545]"><input id="lf" value="100%" class="w-[38px] pl-1"><button aria-label="填充" class="grid w-3.5 place-items-center border-l border-[#666]"><svg class="h-[6px] w-2"><use href="#chev"/></svg></button></div>
    </div>
    <div class="flex min-h-0 flex-1 bg-[#4d4d4d]">
      <ul class="min-w-0 flex-1">
        <li class="flex h-7 items-center border-b border-[#404040] bg-[#535353]"><span class="grid w-[30px] place-items-center"><svg class="h-2.5 w-3.5"><use href="#eye"/></svg></span><div class="flex h-full flex-1 items-center border-l border-[#404040] bg-[#6a6a6a] pl-0.5"><span class="relative grid h-[23px] w-9 place-items-center"><span class="h-[18px] w-8 bg-[conic-gradient(#ccc_25%,#fff_0_50%,#ccc_0_75%,#fff_0)] bg-[length:8px_8px]"></span><svg class="absolute inset-0 h-[23px] w-9" viewBox="0 0 36 23"><path d="M12 .5H.5V9M24 .5h11.500V9M.5 14v8.500H12M35.500 14v8.500H24" fill="none" stroke="#fff"/></svg></span><span class="ml-2">图层 4</span></div></li>
        <li class="flex h-7 items-center border-b border-[#404040] bg-[#535353]"><span class="grid w-[30px] place-items-center"><span class="h-3 w-3 border-r border-b border-[#707070]"></span></span><div class="flex h-full flex-1 items-center border-l border-[#404040] pl-1"><span class="h-[18px] w-8 border-t border-[#222] bg-[conic-gradient(#ccc_25%,#fff_0_50%,#ccc_0_75%,#fff_0)] bg-[length:8px_8px]"></span><span class="ml-2">图层 3</span></div></li>
        <li class="flex h-7 items-center border-b border-[#404040] bg-[#535353]"><span class="grid w-[30px] place-items-center"><svg class="h-2.5 w-3.5"><use href="#eye"/></svg></span><div class="flex h-full flex-1 items-center border-l border-[#404040] pl-1"><svg class="h-[18px] w-8 bg-linear-to-br from-[#15304f] to-[#436c92]" viewBox="0 0 32 18"><path d="M4 3h12" stroke="#9bc" stroke-dasharray="2 1"/><path d="M6 7H4v5h2" fill="none" stroke="#fff" stroke-width="1.500"/><path d="M9 8h1v5H9zM11 10h1v3h-1zM13 10h1v1h-1zM15 10h1v1h-1zM13 12h1v1h-1zM15 12h1v1h-1z" fill="#fff"/></svg><span class="ml-2">图层 2</span></div></li>
        <li class="flex h-7 items-center border-b border-[#404040] bg-[#535353]"><span class="grid w-[30px] place-items-center"><span class="h-3 w-3 border-r border-b border-[#707070]"></span></span><div class="flex h-full flex-1 items-center border-l border-[#404040] pl-1"><svg class="h-[18px] w-8 bg-linear-to-br from-[#15304f] to-[#436c92]" viewBox="0 0 32 18"><path d="M4 3h12" stroke="#9bc" stroke-dasharray="2 1"/><path d="M4 8h2v2H4zM7 6h2v2H7zM7 12h2v2H7zM10 9h2v2h-2zM10 13h2v2h-2z" fill="#fff"/><path d="M22 6v8" stroke="#234" stroke-width="3" stroke-dasharray="1 2"/></svg><span class="ml-2">图层 1</span></div></li>
        <li class="flex h-7 items-center border-b border-[#454545] bg-[#535353]"><span class="grid w-[30px] place-items-center"><svg class="h-2.5 w-3.5"><use href="#eye"/></svg></span><div class="flex h-full flex-1 items-center border-l border-[#404040] pr-4 pl-1"><span class="h-[18px] w-8 border-t border-[#222] bg-white"></span><span class="ml-2 flex-1">背景</span><svg class="h-3 w-2.5" viewBox="0 0 10 12"><path d="M.6 5h8.800v6.400H.6zM2 5V3a3 2.500 0 0 1 6 0v2" fill="none" stroke="#ddd" stroke-width="1.200"/><circle cx="5" cy="8" r="1" fill="#ddd"/></svg></div></li>
      </ul>
      <div class="w-4 bg-[#4a4a4a]"></div>
    </div>
    <div class="flex h-[25px] shrink-0 items-center justify-end gap-[15px] border-t border-[#383838] pr-7 text-[#ddd]">
      <svg class="h-2 w-3.5 text-[#888]" viewBox="0 0 14 8"><path d="M6 1.500H3.500a2.500 2.500 0 0 0 0 5H6M8 1.500h2.500a2.500 2.500 0 0 1 0 5H8M4 4h6" fill="none" stroke="currentColor" stroke-width="1.200"/></svg>
      <button class="text-sm leading-3 italic">fx</button>
      <svg class="h-[11px] w-[13px]" viewBox="0 0 13 11"><path d="M0 0h13v11H0z" fill="currentColor"/><circle cx="6.500" cy="5.500" r="3" fill="#444"/></svg>
      <svg class="h-3.5 w-3.5"><use href="#half"/></svg>
      <svg class="h-2.5 w-3" viewBox="0 0 12 10"><path d="M0 0h5l1 1.500h6V10H0z" fill="currentColor"/></svg>
      <svg class="h-3 w-3" viewBox="0 0 12 12"><path d="M.5.5h11v11H.5zM6 3v6M3 6h6" fill="none" stroke="currentColor"/></svg>
      <svg class="h-3 w-3" viewBox="0 0 12 12"><path d="M0 2.500h12M4 2V.5h4V2M2 3v8.500h8V3M4.500 4v6M7.500 4v6" fill="none" stroke="currentColor"/></svg>
    </div>
  </aside>
</main>

<footer class="grid h-[49px] shrink-0 grid-cols-[1fr_auto_1fr] items-center border-t border-[#2a2a2a] bg-[linear-gradient(90deg,#1a2439_0%,#20222c_14%,#262229_26%,#16253d_33%,#10252f_42%,#11272f_62%,#1c242c_76%,#2a2422_88%,#2a2422_100%)]">
  <div class="flex items-center gap-2 pl-5"><svg class="h-6 w-6" viewBox="0 0 24 24"><path d="M13 1c9 5 10 17 0 22C8 25 3 22 1 17c9 1 13-6 12-16z" fill="#fbe19a"/><path d="M13 1c6 4 8 9 6 15-4-1-6-2-7-4 1-3 2-7 1-11z" fill="#f5be1e"/></svg><div>19°C<br>薄雾</div></div>
  <nav class="flex items-center gap-5 pl-0.5">
    <a href="#" aria-label="开始"><svg class="h-6 w-6" viewBox="0 0 24 24"><path d="M1 1h10.500v10.500H1zM12.500 1H23v10.500H12.500zM1 12.500h10.500V23H1zM12.500 12.500H23V23H12.500z" fill="#2fb4fb"/></svg></a>
    <a href="#" aria-label="搜索"><svg class="h-6 w-6" viewBox="0 0 24 24"><circle cx="13" cy="10" r="8" fill="#3c4c55" stroke="#e8edf0" stroke-width="2"/><path d="M7 16l-5 6" stroke="#e8edf0" stroke-width="3"/></svg></a>
    <a href="#" aria-label="任务视图"><svg class="h-6 w-6" viewBox="0 0 24 24"><path d="M6 1h18v15H6z" fill="#f0f1f3"/><path d="M0 7h18v15H0z" fill="#777c80" opacity=".9"/></svg></a>
    <a href="#" aria-label="文件资源管理器" class="relative"><svg class="h-6 w-6" viewBox="0 0 24 24"><path d="M0 2h10l2 3v4H0z" fill="#d99a17"/><path d="M0 5h24v17H0z" fill="#fbcb45"/><path d="M4 22v-6l2-1h12l2 1v6z" fill="#1479cd"/></svg><span class="absolute top-7 left-[9px] h-[3px] w-1.5 rounded-full bg-[#9aa4aa]"></span></a>
    <a href="#" aria-label="商店"><svg class="h-6 w-6" viewBox="0 0 24 24"><path d="M7 6V2h10v4" fill="none" stroke="#4db4ee" stroke-width="2"/><path d="M1 5h22v16l-2 2H3l-2-2z" fill="#eef1f4"/><path d="M7.500 9.500h4v4h-4z" fill="#f25022"/><path d="M12.500 9.500h4v4h-4z" fill="#7fba00"/><path d="M7.500 14.500h4v4h-4z" fill="#00a4ef"/><path d="M12.500 14.500h4v4h-4z" fill="#ffb900"/></svg></a>
    <a href="#" aria-label="监视器"><svg class="h-6 w-6" viewBox="0 0 24 24"><path d="M0 2h24v19H0z" fill="#cbdfeb"/><path d="M2 19v-4l3-9 3 10 4-3 3-9 3 11 4 1v3z" fill="#79bde8" stroke="#3286bd"/></svg></a>
    <a href="#" aria-label="Chrome" class="relative"><svg class="h-6 w-6" viewBox="0 0 24 24"><circle cx="12" cy="12" r="11.500" fill="#fbc116"/><path d="M2 6a11.500 11.500 0 0 1 20 0l1 2H12l-5 6z" fill="#e33b2e"/><path d="M2 6l5.500 9 6 3-3 5.500A11.500 11.500 0 0 1 2 6z" fill="#2c9f4b"/><circle cx="12" cy="12" r="5.500" fill="#fff"/><circle cx="12" cy="12" r="4.300" fill="#3c7ff0"/></svg><span class="absolute top-7 left-[9px] h-[3px] w-1.5 rounded-full bg-[#9aa4aa]"></span></a>
    <a href="#" aria-label="飞鸟"><svg class="h-6 w-6" viewBox="0 0 24 24"><rect width="24" height="24" rx="4" fill="#3c83f6"/><path d="M5 7c4 1 6 3 8 4 0-3 2-6 5-8-1 3 0 5 0 7l4 1-4 1c0 6-4 9-8 9 2-1 2-3 1-4l-4 1 3-3c-3-2-5-5-5-8z" fill="#fff"/></svg></a>
    <a href="#" aria-label="WPS" class="relative"><svg class="h-6 w-6" viewBox="0 0 24 24"><path d="M1 4h5l3 10 3-9h3l1 9 5-11" fill="none" stroke="#ee4023" stroke-width="3"/><path d="M2 4l6 17 4-9 4 9L22 8" fill="none" stroke="#ee4023" stroke-width="3"/></svg><span class="absolute -top-1 left-[18px] rounded-sm bg-[#ed8a69] px-0.5 text-[8px] leading-[10px]">P</span><span class="absolute top-7 left-[9px] h-[3px] w-1.5 rounded-full bg-[#9aa4aa]"></span></a>
    <a href="#" aria-label="录屏" class="relative"><svg class="h-6 w-6" viewBox="0 0 24 24"><rect width="24" height="24" rx="4" fill="#0c0d0e"/><rect x="4" y="7" width="12" height="11" rx="2" fill="#f4543c"/><path d="M16 12l4-3v7l-4-3z" fill="#e9c08b"/></svg><span class="absolute top-7 left-[9px] h-[3px] w-1.5 rounded-full bg-[#9aa4aa]"></span></a>
    <a href="#" aria-label="地球" class="relative"><svg class="h-6 w-6" viewBox="0 0 24 24"><circle cx="12" cy="12" r="11.500" fill="#3795dc"/><path d="M3 5c4-5 8-5 9-3l-3 5 2 4-4 5-4-5zM14 3c5 0 8 4 9 8l-5 2-4-4zM9 17l5-2 2 6-4 2z" fill="#72bc49"/><path d="M19 13l5 6h-3v5h-4v-5h-3z" fill="#ffe23c"/></svg><span class="absolute top-7 left-[9px] h-[3px] w-1.5 rounded-full bg-[#9aa4aa]"></span></a>
    <a href="#" aria-label="Photoshop" class="relative -m-2 rounded border border-[#2c4048] bg-[#1c323b] p-[7px]"><svg class="h-6 w-6" viewBox="0 0 24 24"><rect x="1" y="1" width="21" height="21" rx="3" fill="#001e36"/><text x="5" y="16" font-size="12" font-weight="600" fill="#31a8ff">Ps</text></svg><span class="absolute bottom-0 left-3 h-[3px] w-4 rounded-full bg-[#5fc0f2]"></span></a>
  </nav>
  <div class="pr-[17px] text-right">23:53<br>2022/4/25</div>
</footer>

<!-- floating helpers above the desktop -->
<div class="absolute top-[817px] right-0 flex h-[50px] w-6 items-center justify-center gap-1 rounded-l-lg border border-r-0 border-[#555] bg-[#35373a]"><span class="h-7 w-px bg-black"></span><span class="h-7 w-px bg-black"></span></div>
<div class="absolute top-[934px] right-0 flex h-[26px] w-[170px] items-center bg-white">
  <svg class="-ml-2 h-[31px] w-8 shrink-0" viewBox="0 0 32 31"><path d="M3 4L25 0l3 2 4 19-2 4-21 5-4-3L0 7z" fill="#f15a22"/><path d="M25 7C16 5 9 7 9 11c0 5 15 2 15 7 0 4-9 5-17 2" fill="none" stroke="#fff" stroke-width="4.500"/></svg>
  <span class="ml-1 text-base font-bold text-[#0a66c8]">中</span>
  <svg class="ml-2.5 h-3.5 w-3.5" viewBox="0 0 14 14"><circle cx="4" cy="4" r="1.600" fill="none" stroke="#0a66c8" stroke-width="1.500"/><path d="M9 7h3v3l-2 3H9l1-3H9z" fill="#0a66c8"/></svg>
  <svg class="mr-1.5 ml-auto h-4 w-[38px]" viewBox="0 0 38 16"><path d="M1 3l4-2c1 2 3 2 4 0l5 2-1 4h-2v8H3V7H1zM24 2h6v5h-6zM32 2h6v5h-6zM24 9h6v5h-6zM32 9h6v5h-6z" fill="#0a66c8"/></svg>
</div>
<svg class="absolute top-[914px] right-[38px] h-[54px] w-[56px]" viewBox="0 0 56 54"><path d="M15 3l6 7M41 3l-6 7" stroke="#dedede" stroke-width="5" stroke-linecap="round"/><rect x="1" y="9" width="54" height="44" rx="10" fill="#dedede"/><rect x="5" y="25" width="7" height="10" rx="3" fill="#a9c6e4"/><path d="M3 32c1 7 10 7 11 0M8.500 37v5" fill="none" stroke="#a9c6e4" stroke-width="1.500"/><rect x="27" y="26" width="14" height="12" fill="#b9cee3"/><path d="M20 23l18 10-14 9c-3 1-4 0-4-2z" fill="#d6d6d6" stroke="#b5b5b5"/><path d="M27 28h10c3 5-1 9-8 10l-2-2zM30.500 28v10M34 28v8M27 31.500h11M27 35h10" fill="none" stroke="#0a5ab8" stroke-width="1.500"/></svg>

<script>
// Brush strokes are stored as point lists and smoothed with a Catmull-Rom curve.
document.querySelectorAll('[data-ink]').forEach(el => {
  const n = el.dataset.ink.split(' ').map(Number), p = [];
  for (let i = 0; i < n.length; i += 2) p.push([n[i], n[i + 1]]);
  let d = 'M' + p[0];
  for (let i = 0; i < p.length - 1; i++) {
    const a = p[i - 1] || p[i], b = p[i], c = p[i + 1], e = p[i + 2] || c;
    d += 'C' + [b[0] + (c[0] - a[0]) / 6, b[1] + (c[1] - a[1]) / 6, c[0] - (e[0] - b[0]) / 6, c[1] - (e[1] - b[1]) / 6, c[0], c[1]];
  }
  el.setAttribute('d', d);
  el.setAttribute('vector-effect', 'non-scaling-stroke');
});
</script>
</body>
</html>
